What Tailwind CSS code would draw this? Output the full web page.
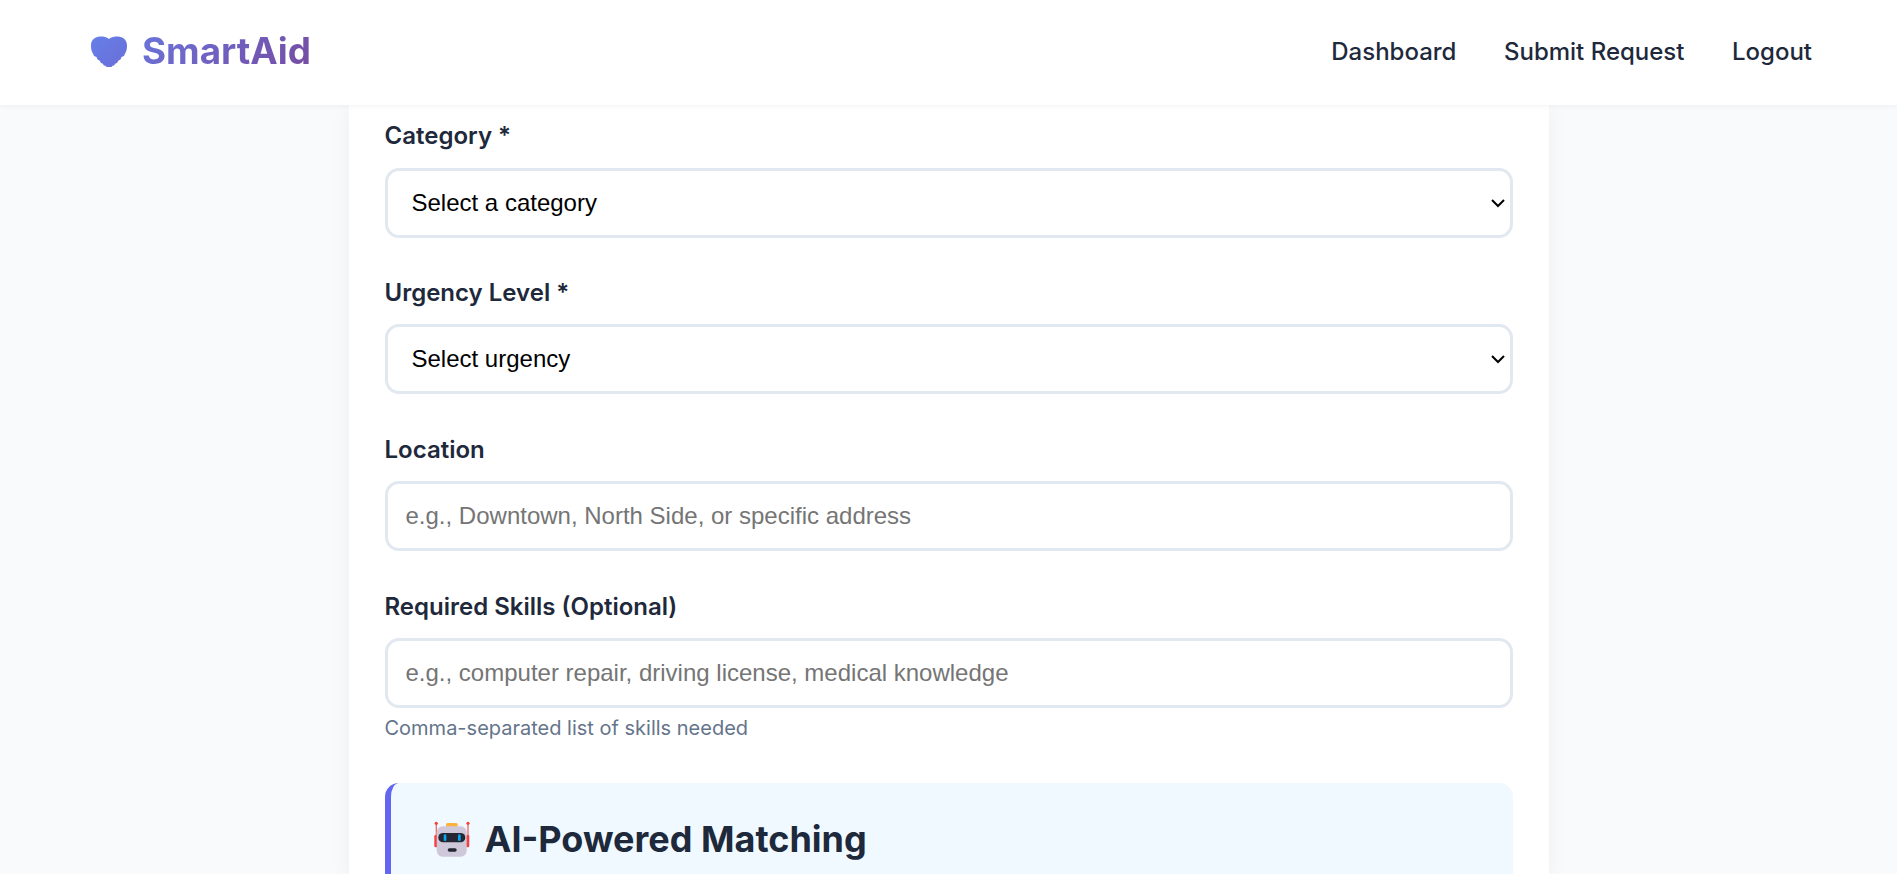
<!DOCTYPE html>
<html lang="en">
<head>
<meta charset="UTF-8">
<title>SmartAid</title>
<script src="https://cdn.jsdelivr.net/npm/@tailwindcss/browser@4"></script>
</head>
<body class="h-screen overflow-hidden bg-[#f8fafc] font-['Inter',sans-serif] text-[#1e293b]">
  <!-- nav -->
  <header class="relative z-10 h-[105px] bg-white shadow-[0_2px_4px_rgba(0,0,0,0.04)] flex items-center justify-between pl-[91px] pr-[85px]">
    <a class="flex items-center gap-[15px] text-[36.800px] font-bold leading-none -mt-[2px]">
      <svg class="w-[36px] h-[31px] mt-[1px]" viewBox="0 0 36 31">
        <defs><linearGradient id="hg" x1="0" y1="0" x2="1" y2="1"><stop offset="0" stop-color="#667eea"/><stop offset="1" stop-color="#6a6fd6"/></linearGradient></defs>
        <path fill="url(#hg)" d="M9 0.500C12.500 0.500 16 1 18 3C20 1 23.500 0.500 27 0.500C32 0.500 36 4 36 9.500C36 13 35.500 15.500 34 17.500L33 20L30.500 21L29.500 23.500L27.500 24.500L26 27L24.500 27.500L23 29.500L21.500 29.800L20.500 31L15.500 31L14.500 29.800L13 29.500L11.500 27.500L10 27L8.500 24.500L6.500 23.500L5.500 21L3 20L2 17.500C0.500 15.500 0 13 0 9.500C0 4 4 0.500 9 0.500Z"/>
      </svg>
      <span class="bg-[linear-gradient(135deg,#6a74da,#764ba2)] bg-clip-text text-transparent">SmartAid</span>
    </a>
    <nav class="flex gap-[47.500px] text-[24px] font-medium text-[#1e293b] -mt-[2px]">
      <a>Dashboard</a>
      <a>Submit Request</a>
      <a>Logout</a>
    </nav>
  </header>

  <main class="w-[1200px] mx-auto bg-white shadow-[0_4px_20px_rgba(0,0,0,0.05)] px-[36px] h-[769px] overflow-hidden">
    <div class="pt-[12px] flex flex-col gap-[36.400px]">
      <div>
        <label class="block mb-[12.100px] text-[24px] leading-[38.400px] font-semibold">Category *</label>
        <div class="relative">
          <select class="appearance-none w-full h-[70px] border-[3px] border-[#e2e8f0] rounded-[14px] px-[24px] text-[24px] font-['Liberation_Sans',sans-serif] text-black bg-white">
            <option>Select a category</option>
          </select>
          <svg class="absolute right-[8px] top-[31px] w-[14px] h-[9px] pointer-events-none" viewBox="0 0 14 9" fill="none" stroke="#000" stroke-width="2"><path d="M1 1l6 6 6-6"/></svg>
        </div>
      </div>
      <div>
        <label class="block mb-[12.100px] text-[24px] leading-[38.400px] font-semibold">Urgency Level *</label>
        <div class="relative">
          <select class="appearance-none w-full h-[70px] border-[3px] border-[#e2e8f0] rounded-[14px] px-[24px] text-[24px] font-['Liberation_Sans',sans-serif] text-black bg-white">
            <option>Select urgency</option>
          </select>
          <svg class="absolute right-[8px] top-[31px] w-[14px] h-[9px] pointer-events-none" viewBox="0 0 14 9" fill="none" stroke="#000" stroke-width="2"><path d="M1 1l6 6 6-6"/></svg>
        </div>
      </div>
      <div>
        <label class="block mb-[12.100px] text-[24px] leading-[38.400px] font-semibold">Location</label>
        <input type="text" placeholder="e.g., Downtown, North Side, or specific address" class="w-full h-[70px] border-[3px] border-[#e2e8f0] rounded-[14px] px-[18px] text-[24px] font-['Liberation_Sans',sans-serif] placeholder:text-[#757575]">
      </div>
      <div>
        <label class="block mb-[12.100px] text-[24px] leading-[38.400px] font-semibold">Required Skills (Optional)</label>
        <input type="text" placeholder="e.g., computer repair, driving license, medical knowledge" class="w-full h-[70px] border-[3px] border-[#e2e8f0] rounded-[14px] px-[18px] text-[24px] font-['Liberation_Sans',sans-serif] placeholder:text-[#757575]">
        <p class="mt-[4.500px] text-[20px] text-[#64748b]">Comma-separated list of skills needed</p>
      </div>
    </div>
    <section class="mt-[40.500px] bg-[#f0f9ff] border-l-[6px] border-[#6366f1] rounded-[14px] pl-[43px] pt-[29px] pb-[30px]">
      <h3 class="flex items-center gap-[15px] text-[36px] font-bold">
        <svg class="w-[36px] h-[36px]" viewBox="0 0 36 36">
          <path d="M2.300 2.300V16M34 2.300V16" stroke="#f05a5a" stroke-width="1.200"/>
          <circle cx="2.300" cy="2.300" r="1.600" fill="#f44336"/><circle cx="34" cy="2.300" r="1.600" fill="#f44336"/>
          <rect x="12" y="2" width="11.700" height="4.500" rx="1.500" fill="#ffb13d"/>
          <rect x="0.300" y="14" width="3.400" height="12.300" rx="1.200" fill="#f44040"/>
          <rect x="31.900" y="14" width="3.400" height="12.300" rx="1.200" fill="#f44040"/>
          <rect x="2.700" y="5.300" width="30" height="30.400" rx="6" fill="#cfc8da"/>
          <rect x="4.300" y="12" width="27" height="9.300" rx="4.650" fill="#252733"/>
          <rect x="9.700" y="13.300" width="2.700" height="6.700" rx="1.350" fill="#03a9f4"/>
          <rect x="24" y="13.300" width="2.700" height="6.700" rx="1.350" fill="#03a9f4"/>
          <rect x="13.700" y="27.300" width="9" height="3.400" rx="1.700" fill="#252733"/>
        </svg>
        AI-Powered Matching
      </h3>
    </section>
  </main>
</body>
</html>
